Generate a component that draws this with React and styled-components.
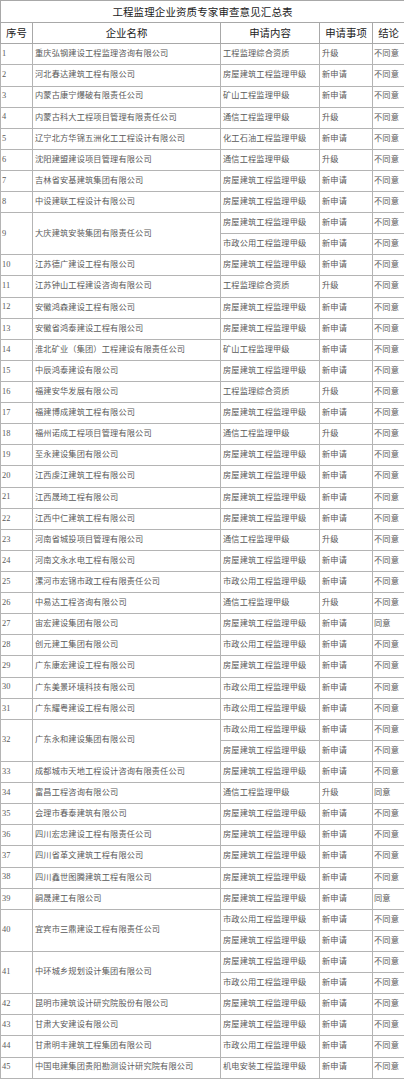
import styled, { createGlobalStyle } from "styled-components";

const GlobalStyle = createGlobalStyle`
  html, body {
    margin: 0;
    padding: 0;
    background: #ffffff;
  }
`;

// 申请内容 shorthand
const FW = "房屋建筑工程监理甲级";
const SZ = "市政公用工程监理甲级";
const TX = "通信工程监理甲级";
const ZH = "工程监理综合资质";
const KS = "矿山工程监理甲级";

const NEW = "新申请";
const UP = "升级";
const NO = "不同意";
const YES = "同意";

const rows = [
  [1, "重庆弘钢建设工程监理咨询有限公司", [[ZH, UP, NO]]],
  [2, "河北春达建筑工程有限公司", [[FW, NEW, NO]]],
  [3, "内蒙古康宁爆破有限责任公司", [[KS, NEW, NO]]],
  [4, "内蒙古科大工程项目管理有限责任公司", [[TX, UP, NO]]],
  [5, "辽宁北方华锦五洲化工工程设计有限公司", [["化工石油工程监理甲级", NEW, NO]]],
  [6, "沈阳建盟建设项目管理有限公司", [[TX, UP, NO]]],
  [7, "吉林省安基建筑集团有限公司", [[FW, NEW, NO]]],
  [8, "中设建联工程设计有限公司", [[FW, NEW, NO]]],
  [9, "大庆建筑安装集团有限责任公司", [[FW, NEW, NO], [SZ, NEW, NO]]],
  [10, "江苏德广建设工程有限公司", [[FW, NEW, NO]]],
  [11, "江苏钟山工程建设咨询有限公司", [[ZH, UP, NO]]],
  [12, "安徽鸿森建设工程有限公司", [[FW, NEW, NO]]],
  [13, "安徽省鸿泰建设工程有限公司", [[FW, NEW, NO]]],
  [14, "淮北矿业（集团）工程建设有限责任公司", [[KS, NEW, NO]]],
  [15, "中辰鸿泰建设有限公司", [[FW, NEW, NO]]],
  [16, "福建安华发展有限公司", [[ZH, UP, NO]]],
  [17, "福建博成建筑工程有限公司", [[FW, NEW, NO]]],
  [18, "福州诺成工程项目管理有限公司", [[TX, UP, NO]]],
  [19, "至永建设集团有限公司", [[FW, NEW, NO]]],
  [20, "江西虔江建筑工程有限公司", [[FW, NEW, NO]]],
  [21, "江西晟琦工程有限公司", [[FW, NEW, NO]]],
  [22, "江西中仁建筑工程有限公司", [[FW, NEW, NO]]],
  [23, "河南省城投项目管理有限公司", [[TX, UP, NO]]],
  [24, "河南文永水电工程有限公司", [[FW, NEW, NO]]],
  [25, "漯河市宏锦市政工程有限责任公司", [[SZ, NEW, NO]]],
  [26, "中易达工程咨询有限公司", [[TX, UP, NO]]],
  [27, "宙宏建设集团有限公司", [[FW, NEW, YES]]],
  [28, "创元建工集团有限公司", [[SZ, NEW, NO]]],
  [29, "广东康宏建设工程有限公司", [[FW, NEW, NO]]],
  [30, "广东美景环境科技有限公司", [[SZ, NEW, NO]]],
  [31, "广东耀粤建设工程有限公司", [[SZ, NEW, NO]]],
  [32, "广东永和建设集团有限公司", [[SZ, NEW, NO], [FW, NEW, NO]]],
  [33, "成都城市天地工程设计咨询有限责任公司", [[FW, NEW, NO]]],
  [34, "富昌工程咨询有限公司", [[TX, UP, YES]]],
  [35, "会理市春泰建筑有限公司", [[FW, NEW, NO]]],
  [36, "四川宏忠建设工程有限责任公司", [[FW, NEW, NO]]],
  [37, "四川省革文建筑工程有限公司", [[FW, NEW, NO]]],
  [38, "四川鑫世图腾建筑工程有限公司", [[FW, NEW, NO]]],
  [39, "嗣晟建工有限公司", [[FW, NEW, YES]]],
  [40, "宜宾市三鼎建设工程有限责任公司", [[SZ, NEW, NO], [FW, NEW, NO]]],
  [41, "中环城乡规划设计集团有限公司", [[FW, NEW, NO], [SZ, NEW, NO]]],
  [42, "昆明市建筑设计研究院股份有限公司", [[FW, NEW, NO]]],
  [43, "甘肃大安建设有限公司", [[FW, NEW, NO]]],
  [44, "甘肃明丰建筑工程集团有限公司", [[SZ, NEW, NO]]],
  [45, "中国电建集团贵阳勘测设计研究院有限公司", [["机电安装工程监理甲级", NEW, NO]]],
];

export default function App() {
  return (
    <>
      <GlobalStyle />
      <Sheet>
        <colgroup>
          <col style={{ width: 32 }} />
          <col style={{ width: 188 }} />
          <col style={{ width: 99 }} />
          <col style={{ width: 53 }} />
          <col style={{ width: 32 }} />
        </colgroup>
        <thead>
          <TitleRow>
            <TitleCell colSpan={5}>工程监理企业资质专家审查意见汇总表</TitleCell>
          </TitleRow>
          <HeadRow>
            <HeadCell>序号</HeadCell>
            <HeadCell>企业名称</HeadCell>
            <HeadCell>申请内容</HeadCell>
            <HeadCell>申请事项</HeadCell>
            <HeadCell>结论</HeadCell>
          </HeadRow>
        </thead>
        <tbody>
          {rows.map(([no, name, items]) =>
            items.map(([content, kind, result], i) => (
              <Row key={`${no}-${i}`}>
                {i === 0 && (
                  <>
                    <NumCell rowSpan={items.length}>{no}</NumCell>
                    <Cell rowSpan={items.length}>{name}</Cell>
                  </>
                )}
                <Cell>{content}</Cell>
                <Cell>{kind}</Cell>
                <Cell $tight>{result}</Cell>
              </Row>
            ))
          )}
        </tbody>
      </Sheet>
    </>
  );
}

const Sheet = styled.table`
  width: 404px;
  table-layout: fixed;
  border-collapse: collapse;
  font-family: "Liberation Serif", "Noto Sans CJK SC", serif;
`;

const TitleRow = styled.tr`
  height: 21.7px;
`;

const HeadRow = styled.tr`
  height: 21.6px;
`;

const Row = styled.tr`
  height: 21.12px;
`;

const TitleCell = styled.th`
  border: 1px solid #a8a8a8;
  padding: 0;
  text-align: center;
  vertical-align: middle;
  font-family: "Noto Sans CJK SC", sans-serif;
  font-size: 10.5px;
  font-weight: 400;
  letter-spacing: 0.1px;
  color: #222222;
`;

const HeadCell = styled.th`
  border: 1px solid #a8a8a8;
  padding: 0;
  text-align: center;
  vertical-align: middle;
  font-family: "Noto Sans CJK SC", sans-serif;
  font-size: 10.4px;
  font-weight: 400;
  color: #222222;
  white-space: nowrap;
`;

const Cell = styled.td`
  border: 1px solid #b4b4b4;
  padding: 0 0 0 ${({ $tight }) => ($tight ? "1px" : "2px")};
  text-align: left;
  vertical-align: middle;
  font-size: 8.2px;
  letter-spacing: 0.15px;
  line-height: 1;
  color: #5a5a5a;
  white-space: nowrap;
  overflow: hidden;
`;

const NumCell = styled(Cell)`
  padding-left: 1px;
  font-size: 8.4px;
  letter-spacing: 0;
`;
